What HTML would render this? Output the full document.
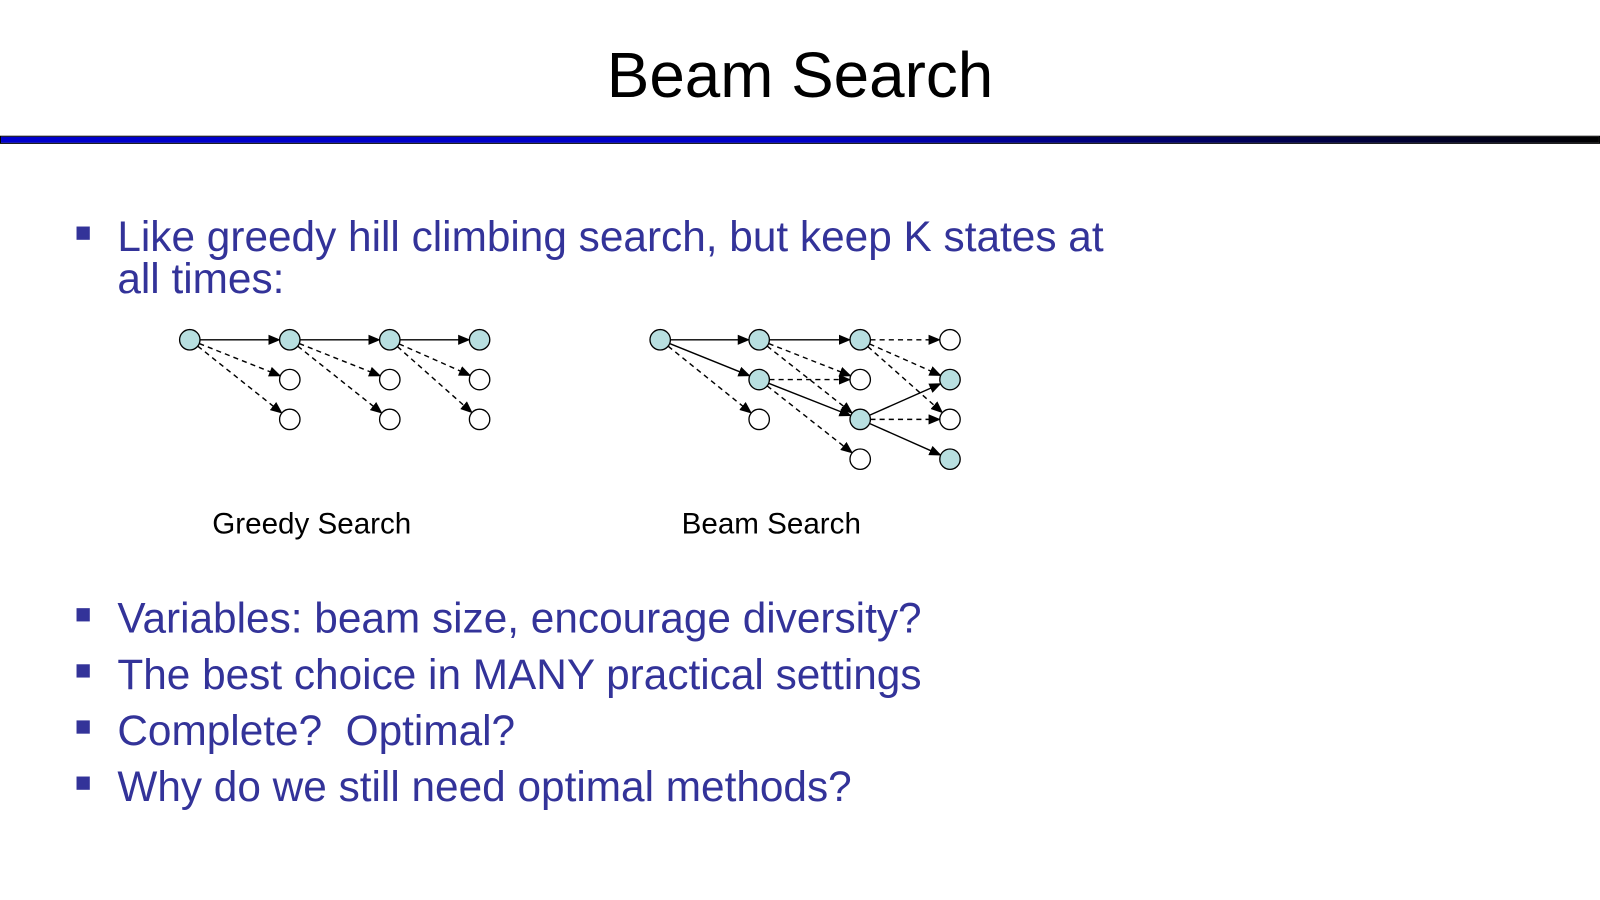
<!DOCTYPE html>
<html><head><meta charset="utf-8"><style>
body{margin:0;width:1600px;height:900px;background:#fff;overflow:hidden;font-family:"Liberation Sans",sans-serif}
#w{position:absolute;left:0;top:0;width:1568px;height:882px;transform:scale(1.0204);transform-origin:0 0}
.t{position:absolute;left:0;width:1568px;top:43px;text-align:center;font-size:62.5px;line-height:1;color:#000}
.bar{position:absolute;left:0;top:133px;width:1566px;height:6px;border:1px solid #000;background:linear-gradient(90deg,#0000cc 0%,#0000c8 50%,#000 100%)}
.b{position:absolute;left:115px;color:#333399;font-size:41.5px;line-height:41px;white-space:nowrap}
.b:before{content:"";position:absolute;left:-40px;top:11px;width:13px;height:13px;background:#333399}
.c{position:absolute;font-size:29px;line-height:1;color:#000;top:500px}
</style></head><body><div id="w">
<div class="t">Beam Search</div>
<div class="bar"></div>
<div class="b" style="top:211px">Like greedy hill climbing search, but keep K states at<br>all times:</div>
<svg id="g" width="1000" height="480" style="position:absolute;left:0;top:0"></svg>
<div class="c" style="left:208px">Greedy Search</div>
<div class="c" style="left:668px">Beam Search</div>
<div class="b" style="top:585px">Variables: beam size, encourage diversity?</div>
<div class="b" style="top:640px">The best choice in MANY practical settings</div>
<div class="b" style="top:695px">Complete?&nbsp; Optimal?</div>
<div class="b" style="top:750px">Why do we still need optimal methods?</div>
</div>
<script>
var s='<defs><marker id="a" markerWidth="12" markerHeight="10" refX="11" refY="5" orient="auto" markerUnits="userSpaceOnUse"><path d="M0,0L12,5L0,10z" fill="#000"/></marker></defs>';
var R=10;
function e(x1,y1,x2,y2,d){var dx=x2-x1,dy=y2-y1,l=Math.sqrt(dx*dx+dy*dy),ux=dx/l,uy=dy/l;
s+='<line x1="'+(x1+ux*R)+'" y1="'+(y1+uy*R)+'" x2="'+(x2-ux*R)+'" y2="'+(y2-uy*R)+'" stroke="#000" stroke-width="1.4" '+(d?'stroke-dasharray="5,4" ':'')+'marker-end="url(#a)"/>';}
var gx=[186,284,382,470];
for(var i=0;i<3;i++){e(gx[i],333,gx[i+1],333,0);e(gx[i],333,gx[i+1],372,1);e(gx[i],333,gx[i+1],411,1);}
var bx=[647,744,843,931];
e(bx[0],333,bx[1],333,0);e(bx[0],333,bx[1],372,0);e(bx[1],333,bx[2],333,0);e(bx[1],372,bx[2],411,0);e(bx[2],411,bx[3],372,0);e(bx[2],411,bx[3],450,0);
e(bx[0],333,bx[1],411,1);e(bx[1],333,bx[2],372,1);e(bx[1],333,bx[2],411,1);e(bx[1],372,bx[2],372,1);e(bx[1],372,bx[2],450,1);
e(bx[2],333,bx[3],333,1);e(bx[2],333,bx[3],372,1);e(bx[2],333,bx[3],411,1);e(bx[2],411,bx[3],411,1);
function n(x,y,f){s+='<circle cx="'+x+'" cy="'+y+'" r="'+R+'" fill="'+(f?'#b8dfe0':'#fff')+'" stroke="#000" stroke-width="1.3"/>';}
for(i=0;i<4;i++){n(gx[i],333,1);if(i){n(gx[i],372,0);n(gx[i],411,0);}}
n(bx[0],333,1);n(bx[1],333,1);n(bx[1],372,1);n(bx[1],411,0);
n(bx[2],333,1);n(bx[2],372,0);n(bx[2],411,1);n(bx[2],450,0);
n(bx[3],333,0);n(bx[3],372,1);n(bx[3],411,0);n(bx[3],450,1);
document.getElementById('g').innerHTML=s;
</script>
</body></html>
